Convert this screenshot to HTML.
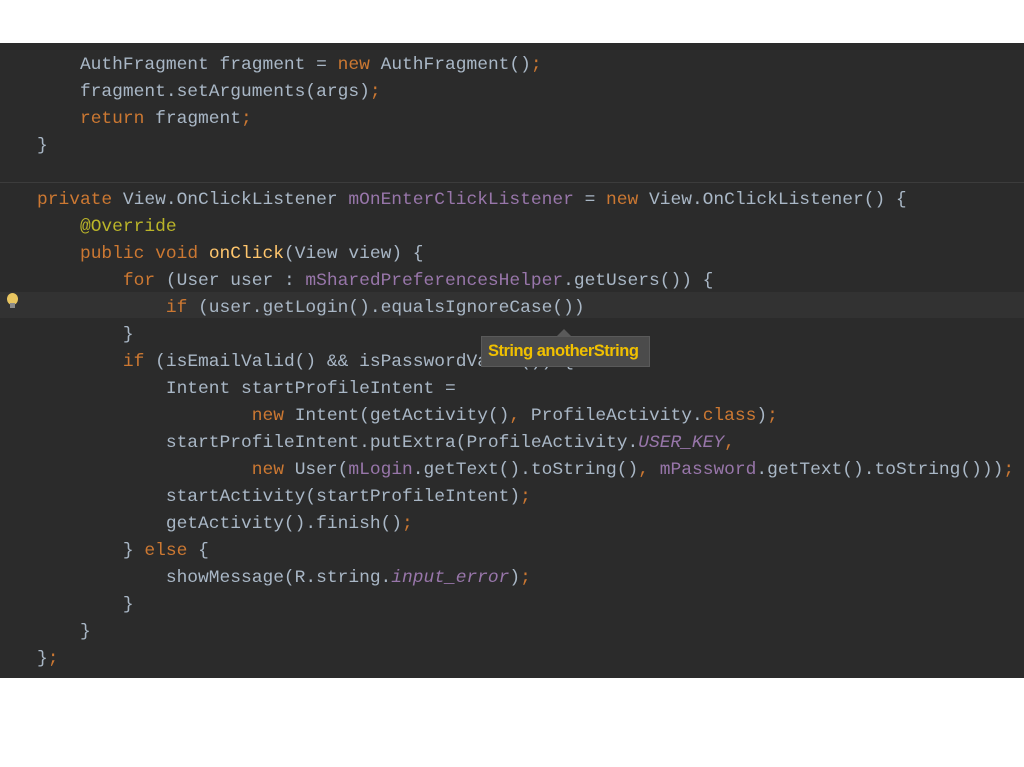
<!DOCTYPE html>
<html><head><meta charset="utf-8"><style>
html,body{margin:0;padding:0;background:#fff;width:1024px;height:767px;overflow:hidden}
#ed{position:absolute;left:0;top:43px;width:1024px;height:635px;background:#2b2b2b}
pre{position:absolute;left:37px;top:9px;margin:0;font-family:"Liberation Mono",monospace;font-size:17.9px;line-height:27px;color:#a9b7c6;white-space:pre}
.k{color:#cc7832}.p{color:#9876aa}.a{color:#bbb529}.m{color:#ffc66d}.i{color:#9876aa;font-style:italic}
#sep{position:absolute;left:0;top:139px;width:1024px;height:1px;background:#3c3c3c}
#cur{position:absolute;left:0;top:249px;width:1024px;height:26px;background:#323232}
#tip{position:absolute;left:481px;top:293px;width:169px;height:31px;background:#4b4b4b;border:1px solid #5a5a5a;box-sizing:border-box;font-family:"Liberation Sans",sans-serif;font-weight:bold;font-size:16.5px;color:#f0c000;line-height:29px;padding-left:6px;letter-spacing:-0.5px;white-space:nowrap}
#tip:before{content:"";position:absolute;left:74px;top:-8px;border-left:8px solid transparent;border-right:8px solid transparent;border-bottom:8px solid #5a5a5a}
#bulb{position:absolute;left:7px;top:250px;width:11px;height:12px;border-radius:50%;background:#e8c560}
#bulb2{position:absolute;left:10px;top:260px;width:5px;height:5px;background:#8a8a8a}
</style></head><body>
<div id="ed">
<div id="sep"></div><div id="cur"></div>
<div id="bulb"></div><div id="bulb2"></div>
<pre>    AuthFragment fragment = <span class="k">new</span> AuthFragment()<span class="k">;</span>
    fragment.setArguments(args)<span class="k">;</span>
    <span class="k">return</span> fragment<span class="k">;</span>
}

<span class="k">private</span> View.OnClickListener <span class="p">mOnEnterClickListener</span> = <span class="k">new</span> View.OnClickListener() {
    <span class="a">@Override</span>
    <span class="k">public void</span> <span class="m">onClick</span>(View view) {
        <span class="k">for</span> (User user : <span class="p">mSharedPreferencesHelper</span>.getUsers()) {
            <span class="k">if</span> (user.getLogin().equalsIgnoreCase())
        }
        <span class="k">if</span> (isEmailValid() &amp;&amp; isPasswordValid()) {
            Intent startProfileIntent =
                    <span class="k">new</span> Intent(getActivity()<span class="k">,</span> ProfileActivity.<span class="k">class</span>)<span class="k">;</span>
            startProfileIntent.putExtra(ProfileActivity.<span class="i">USER_KEY</span><span class="k">,</span>
                    <span class="k">new</span> User(<span class="p">mLogin</span>.getText().toString()<span class="k">,</span> <span class="p">mPassword</span>.getText().toString()))<span class="k">;</span>
            startActivity(startProfileIntent)<span class="k">;</span>
            getActivity().finish()<span class="k">;</span>
        } <span class="k">else</span> {
            showMessage(R.string.<span class="i">input_error</span>)<span class="k">;</span>
        }
    }
}<span class="k">;</span></pre>
<div id="tip">String anotherString</div>
</div>
</body></html>
